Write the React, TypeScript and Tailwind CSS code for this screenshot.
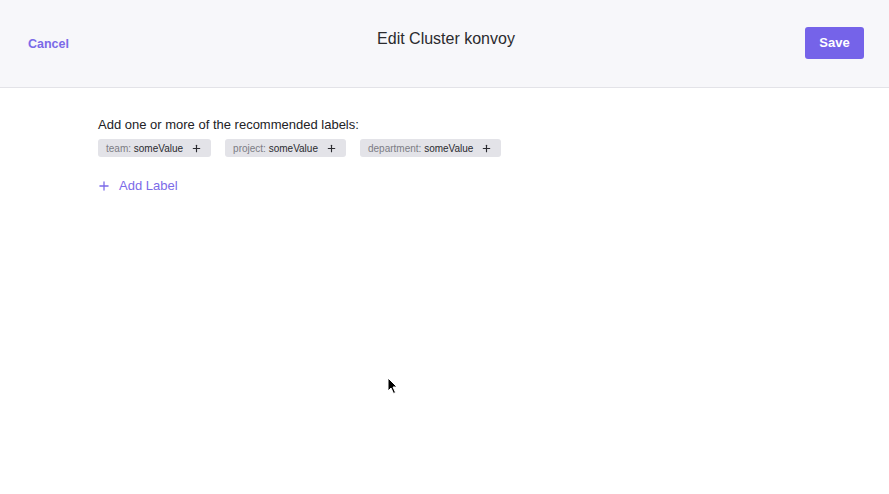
import React from 'react';
import { Plus } from 'lucide-react';

type Suggestion = {
    key: string;
    value: string;
};

const suggestions: Suggestion[] = [
    { key: 'team', value: 'someValue' },
    { key: 'project', value: 'someValue' },
    { key: 'department', value: 'someValue' },
];

const Cursor = () => (
    <svg width="12" height="18" viewBox="0 0 12 18" className="absolute left-[387px] top-[377px]">
        <path d="M1 1 L1 14 L4 11 L6.5 16.5 L8.5 15.5 L6 10 L10 10 Z" fill="#000" stroke="#fff" strokeWidth="1" strokeLinejoin="round" />
    </svg>
);

export default function App() {
    return (
        <div className="relative w-[889px] h-[494px] bg-white overflow-hidden font-['Liberation_Sans',Arial,sans-serif]">
            <header className="h-[88px] bg-[#f7f7fa] border-b border-[#e3e3e8] flex items-center px-7 pb-[1px]">
                <div className="flex-1">
                    <button className="text-[12.5px] font-semibold text-[#7b6ae8]">Cancel</button>
                </div>
                <h1 className="text-[16px] text-[#2b2b2e] -mt-2">Edit Cluster konvoy</h1>
                <div className="flex-1 flex justify-end -mr-[3px]">
                    <button className="h-[32px] w-[59px] rounded-[3px] bg-[#7563e9] text-white text-[13px] font-semibold">
                        Save
                    </button>
                </div>
            </header>

            <main className="pl-[98px] pt-[29px]">
                <p className="text-[13px] text-[#222226] leading-[16px]">Add one or more of the recommended labels:</p>
                <div className="flex gap-[14px] mt-[6px]">
                    {suggestions.map((s) => (
                        <button
                            key={s.key}
                            className="h-[18px] flex items-center gap-[8px] pl-[8px] pr-[9px] rounded-[3px] bg-[#e3e3e8] text-[10px]"
                        >
                            <span>
                                <span className="text-[#7c7c84]">{s.key}: </span>
                                <span className="text-[#2b2b30]">{s.value}</span>
                            </span>
                            <Plus size={11} strokeWidth={2.5} className="text-[#2b2b30]" />
                        </button>
                    ))}
                </div>
                <button className="flex items-center gap-[8px] mt-[19px] text-[#7b6ae8] text-[13px] font-medium">
                    <Plus size={14} strokeWidth={2.2} className="-ml-[1px]" />
                    Add Label
                </button>
            </main>

            <Cursor />
        </div>
    );
}
